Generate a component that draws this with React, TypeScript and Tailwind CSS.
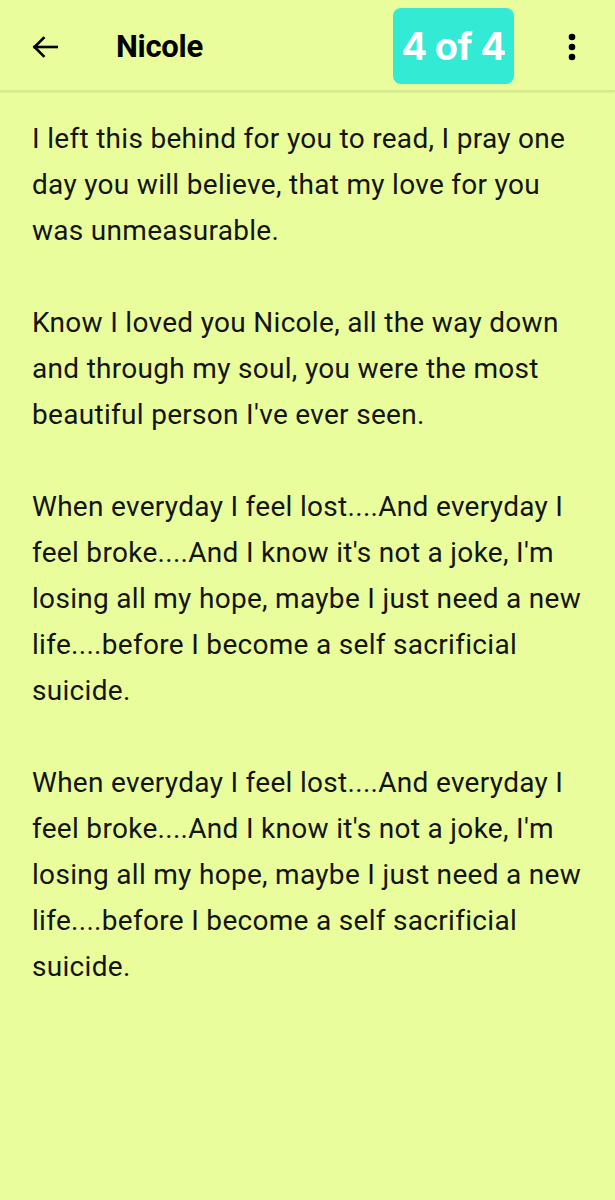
const PARAGRAPHS = [
  "I left this behind for you to read, I pray one day you will believe, that my love for you was unmeasurable.",
  "Know I loved you Nicole, all the way down and through my soul, you were the most beautiful person I've ever seen.",
  "When everyday I feel lost....And everyday I feel broke....And I know it's not a joke, I'm losing all my hope, maybe I just need a new life....before I become a self sacrificial suicide.",
  "When everyday I feel lost....And everyday I feel broke....And I know it's not a joke, I'm losing all my hope, maybe I just need a new life....before I become a self sacrificial suicide.",
];

export default function App() {
  return (
    <div className="min-h-[1200px] w-full bg-[#e9fd9c] font-['Roboto',sans-serif] text-black">
      {/* Top bar */}
      <header className="flex h-[91px] items-center border-b border-[#d6e890] pt-[4px] shadow-[0_1px_2px_rgba(0,0,0,0.12)]">
        <button className="ml-[32px] flex h-[22px] w-[26px] items-center justify-center">
          <svg width="26" height="22" viewBox="0 0 26 22" fill="none" stroke="black" strokeWidth="2.6" strokeLinecap="square">
            <path d="M2.5 11H25" />
            <path d="M11.5 2L2.5 11L11.5 20" strokeLinejoin="miter" />
          </svg>
        </button>
        <h1 className="ml-[58px] text-[31px] font-bold tracking-[-0.3px]">Nicole</h1>
        <div className="ml-auto -mt-[2px] flex h-[76px] w-[121px] items-center justify-center rounded-[8px] bg-[#33ead4]">
          <span className="font-['Inter',sans-serif] text-[38px] font-bold tracking-[-0.6px] text-white">
            4 of 4
          </span>
        </div>
        <button className="ml-[42px] mr-[27px] flex h-8 w-8 items-center justify-center">
          <svg width="8" height="28" viewBox="0 0 8 28" fill="black">
            <circle cx="4" cy="4" r="3.3" />
            <circle cx="4" cy="14" r="3.3" />
            <circle cx="4" cy="24" r="3.3" />
          </svg>
        </button>
      </header>

      {/* Note body */}
      <main className="flex flex-col gap-[46px] pl-[32px] pr-[29px] pt-[25px] text-[28px] leading-[46px] tracking-[0.3px] text-[#141414]">
        {PARAGRAPHS.map((p, i) => (
          <p key={i}>{p}</p>
        ))}
      </main>
    </div>
  );
}
